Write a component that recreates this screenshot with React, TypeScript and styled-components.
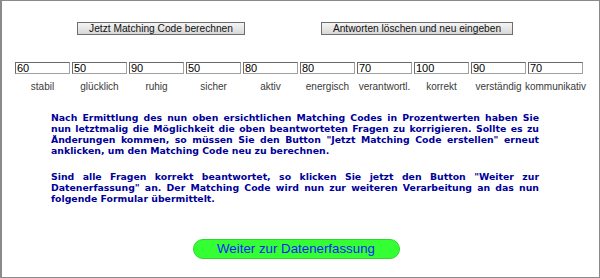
import React from 'react';
import styled, { createGlobalStyle } from 'styled-components';

const GlobalStyle = createGlobalStyle`
  html, body {
    margin: 0;
    padding: 0;
    background: #ffffff;
  }
`;

const Frame = styled.div`
  box-sizing: border-box;
  width: 600px;
  height: 278px;
  border: 1px solid #8a8a8a;
  border-left-width: 2px;
  background: #ffffff;
  font-family: 'Liberation Sans', Arial, sans-serif;
  overflow: hidden;
`;

const ButtonRow = styled.div`
  display: grid;
  grid-template-columns: 256px 256px;
  margin: 21px 0 0 31px;
  justify-items: center;
`;

const GrayButton = styled.button<{ $width: number }>`
  width: ${(p) => p.$width}px;
  height: 13px;
  padding: 0;
  border: 1px solid #6e6e6e;
  background: linear-gradient(#f4f4f4, #d8d8d8);
  font-family: 'Liberation Sans', Arial, sans-serif;
  font-size: 10.2px;
  line-height: 11px;
  color: #111;
`;

const ValueGrid = styled.div`
  display: grid;
  grid-template-columns: repeat(10, 57px);
  margin: 27px 0 0 13px;
`;

const ValueCell = styled.div`
  display: flex;
  flex-direction: column;
  align-items: center;
  width: 55px;
`;

const ValueInput = styled.input`
  box-sizing: border-box;
  width: 55px;
  height: 12px;
  margin: 0;
  padding: 0 1px;
  border: 1px solid #a0a0a0;
  border-top-color: #6a6a6a;
  border-left-color: #6a6a6a;
  font-family: 'Liberation Sans', Arial, sans-serif;
  font-size: 11px;
  line-height: 10px;
  color: #000;
`;

const ValueLabel = styled.span`
  margin-top: 7px;
  font-size: 10px;
  line-height: 11px;
  color: #3a3a3a;
  white-space: nowrap;
`;

const Info = styled.div`
  width: 488px;
  margin: 20px 0 0 49px;
  font-family: 'DejaVu Sans', Verdana, sans-serif;
  font-weight: bold;
  font-size: 9.33px;
  line-height: 11px;
  color: #000099;
  text-align: justify;
`;

const Para = styled.p`
  margin: 0 0 15px 0;
`;

const Footer = styled.div`
  display: flex;
  justify-content: center;
  margin: 35px 0 0 -9px;
`;

const GoButton = styled.button`
  box-sizing: border-box;
  width: 207px;
  height: 20px;
  padding: 0;
  border: 1px solid #2ed62e;
  border-radius: 10px;
  background: #33ff33;
  font-family: 'Liberation Sans', Arial, sans-serif;
  font-size: 13.3px;
  line-height: 18px;
  color: #1a1aff;
`;

const values = [
  { v: '60', label: 'stabil' },
  { v: '50', label: 'glücklich' },
  { v: '90', label: 'ruhig' },
  { v: '50', label: 'sicher' },
  { v: '80', label: 'aktiv' },
  { v: '80', label: 'energisch' },
  { v: '70', label: 'verantwortl.' },
  { v: '100', label: 'korrekt' },
  { v: '90', label: 'verständig' },
  { v: '70', label: 'kommunikativ' },
];

export default function App() {
  return (
    <>
      <GlobalStyle />
      <Frame>
        <ButtonRow>
          <GrayButton $width={168}>Jetzt Matching Code berechnen</GrayButton>
          <GrayButton $width={192}>Antworten löschen und neu eingeben</GrayButton>
        </ButtonRow>
        <ValueGrid>
          {values.map((item, i) => (
            <ValueCell key={i}>
              <ValueInput defaultValue={item.v} />
              <ValueLabel>{item.label}</ValueLabel>
            </ValueCell>
          ))}
        </ValueGrid>
        <Info>
          <Para>
            Nach Ermittlung des nun oben ersichtlichen Matching Codes in Prozentwerten haben Sie nun
            letztmalig die Möglichkeit die oben beantworteten Fragen zu korrigieren. Sollte es zu
            Änderungen kommen, so müssen Sie den Button "Jetzt Matching Code erstellen" erneut
            anklicken, um den Matching Code neu zu berechnen.
          </Para>
          <Para>
            Sind alle Fragen korrekt beantwortet, so klicken Sie jetzt den Button "Weiter zur
            Datenerfassung" an. Der Matching Code wird nun zur weiteren Verarbeitung an das nun
            folgende Formular übermittelt.
          </Para>
        </Info>
        <Footer>
          <GoButton>Weiter zur Datenerfassung</GoButton>
        </Footer>
      </Frame>
    </>
  );
}
